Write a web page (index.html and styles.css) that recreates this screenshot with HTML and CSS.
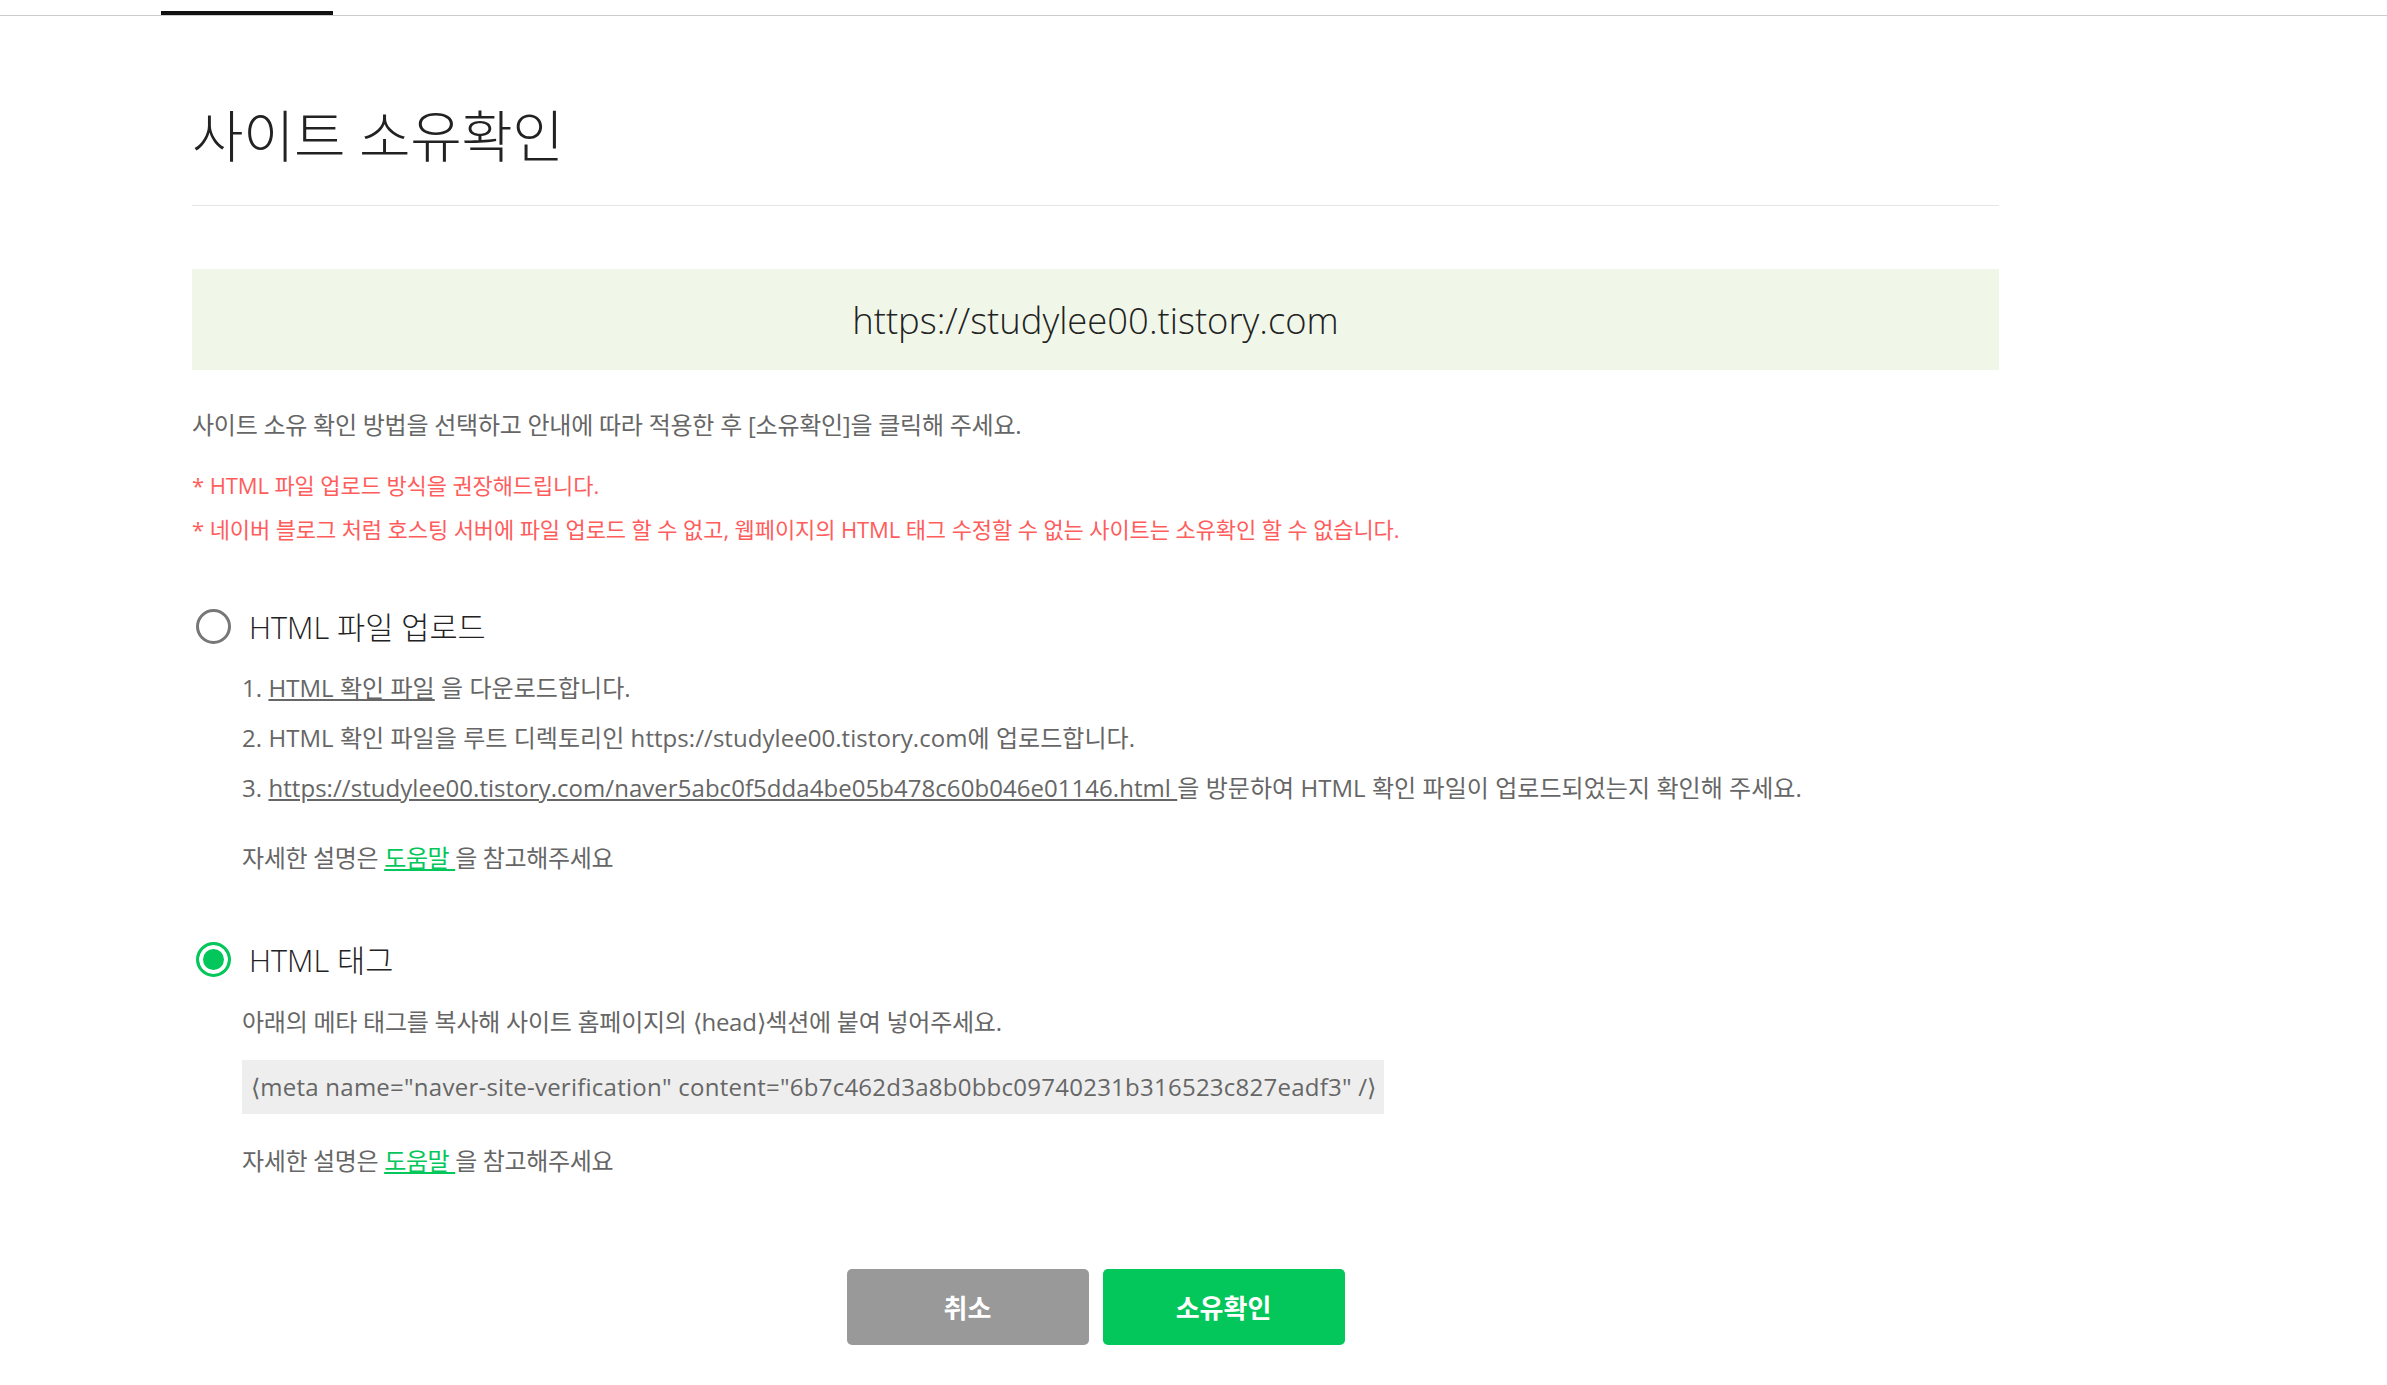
FILE: index.html
```html
<!DOCTYPE html>
<html lang="ko">
<head>
  <meta charset="UTF-8">
  <title>사이트 소유확인</title>
  <link rel="stylesheet" href="styles.css">
</head>
<body>
  <div class="topbar"><span class="tab"></span></div>

  <main class="wrap">
    <h1 class="title">사이트 소유확인</h1>

    <div class="site-url">https://studylee00.tistory.com</div>

    <p class="desc">사이트 소유 확인 방법을 선택하고 안내에 따라 적용한 후 [소유확인]을 클릭해 주세요.</p>

    <ul class="notice">
      <li>* HTML 파일 업로드 방식을 권장해드립니다.</li>
      <li>* 네이버 블로그 처럼 호스팅 서버에 파일 업로드 할 수 없고, 웹페이지의 HTML 태그 수정할 수 없는 사이트는 소유확인 할 수 없습니다.</li>
    </ul>

    <section class="method">
      <label class="radio"><span class="dot"></span>HTML 파일 업로드</label>
      <ol class="steps">
        <li>1. <a href="#">HTML 확인 파일</a> 을 다운로드합니다.</li>
        <li>2. HTML 확인 파일을 루트 디렉토리인 https://studylee00.tistory.com에 업로드합니다.</li>
        <li>3. <a href="#">https://studylee00.tistory.com/naver5abc0f5dda4be05b478c60b046e01146.html </a>을 방문하여 HTML 확인 파일이 업로드되었는지 확인해 주세요.</li>
      </ol>
      <p class="help">자세한 설명은 <a href="#">도움말 </a>을 참고해주세요</p>
    </section>

    <section class="method method-tag">
      <label class="radio"><span class="dot on"></span>HTML 태그</label>
      <p class="guide">아래의 메타 태그를 복사해 사이트 홈페이지의 &lang;head&rang;섹션에 붙여 넣어주세요.</p>
      <div class="meta-box">&lang;meta name="naver-site-verification" content="6b7c462d3a8b0bbc09740231b316523c827eadf3" /&rang;</div>
      <p class="help">자세한 설명은 <a href="#">도움말 </a>을 참고해주세요</p>
    </section>

    <div class="actions">
      <button class="btn cancel">취소</button>
      <button class="btn ok">소유확인</button>
    </div>
  </main>
</body>
</html>
```

FILE: styles.css
```css
body {
  margin: 0;
  font-family: "Open Sans", "Noto Sans CJK KR", sans-serif;
  color: #222;
  background: #fff;
}

.topbar {
  height: 15px;
  border-bottom: 1px solid #ccc;
  padding-left: 161px;
  display: flex;
  align-items: flex-end;
}

.tab {
  width: 172px;
  height: 4px;
  background: #111;
}

.wrap {
  width: 1807px;
  margin-left: 192px;
}

.title {
  margin: 87px 0 0;
  padding-bottom: 37px;
  font-size: 56px;
  line-height: 65px;
  font-weight: 300;
  letter-spacing: -0.5px;
  color: #222;
  border-bottom: 1px solid #e6e6e6;
}

.site-url {
  margin-top: 63px;
  height: 101px;
  background: #f0f7e9;
  display: flex;
  align-items: center;
  justify-content: center;
  font-size: 36.4px;
  font-weight: 300;
  color: #222;
}

.desc {
  margin: 39px 0 0;
  font-size: 24px;
  line-height: 32px;
  color: #666;
  letter-spacing: -0.25px;
}

.notice {
  list-style: none;
  margin: 22px 0 0;
  padding: 0;
  font-size: 22px;
  line-height: 44px;
  color: #ff5c5c;
  letter-spacing: -0.1px;
}

.method {
  margin-top: 55px;
}

.method-tag {
  margin-top: 65px;
}

.radio {
  display: flex;
  align-items: center;
  height: 40px;
  font-size: 30.6px;
  font-weight: 300;
  color: #222;
}

.dot {
  width: 35px;
  height: 35px;
  margin: 0 18px 0 4px;
  border: 3px solid #777;
  border-radius: 50%;
  box-sizing: border-box;
  flex-shrink: 0;
}

.dot.on {
  border-color: #03c75a;
  background: #03c75a;
  box-shadow: inset 0 0 0 4px #fff;
}

.steps {
  list-style: none;
  margin: 17px 0 0;
  padding-left: 50px;
  font-size: 24px;
  line-height: 50px;
  color: #666;
  letter-spacing: 0.05px;
}

.steps a {
  color: #666;
}

.help {
  margin: 29px 0 0;
  padding-left: 50px;
  font-size: 24px;
  line-height: 32px;
  color: #666;
  letter-spacing: -0.35px;
}

.help a {
  color: #03c75a;
}

.guide {
  margin: 27px 0 0;
  padding-left: 50px;
  font-size: 24px;
  line-height: 32px;
  color: #666;
  letter-spacing: -0.25px;
}

.meta-box {
  display: inline-block;
  margin: 22px 0 0 50px;
  padding: 0 7px 0 9px;
  height: 54px;
  line-height: 54px;
  background: #eee;
  font-size: 24px;
  color: #666;
  letter-spacing: 0.25px;
}

.method-tag .help {
  margin-top: 31px;
}

.actions {
  display: flex;
  justify-content: center;
  gap: 14px;
  margin-top: 92px;
}

.btn {
  width: 242px;
  height: 76px;
  border: none;
  border-radius: 5px;
  font-family: inherit;
  font-size: 26px;
  font-weight: 700;
  color: #fff;
  cursor: pointer;
}

.cancel {
  background: #999;
}

.ok {
  background: #03c75a;
}
```
